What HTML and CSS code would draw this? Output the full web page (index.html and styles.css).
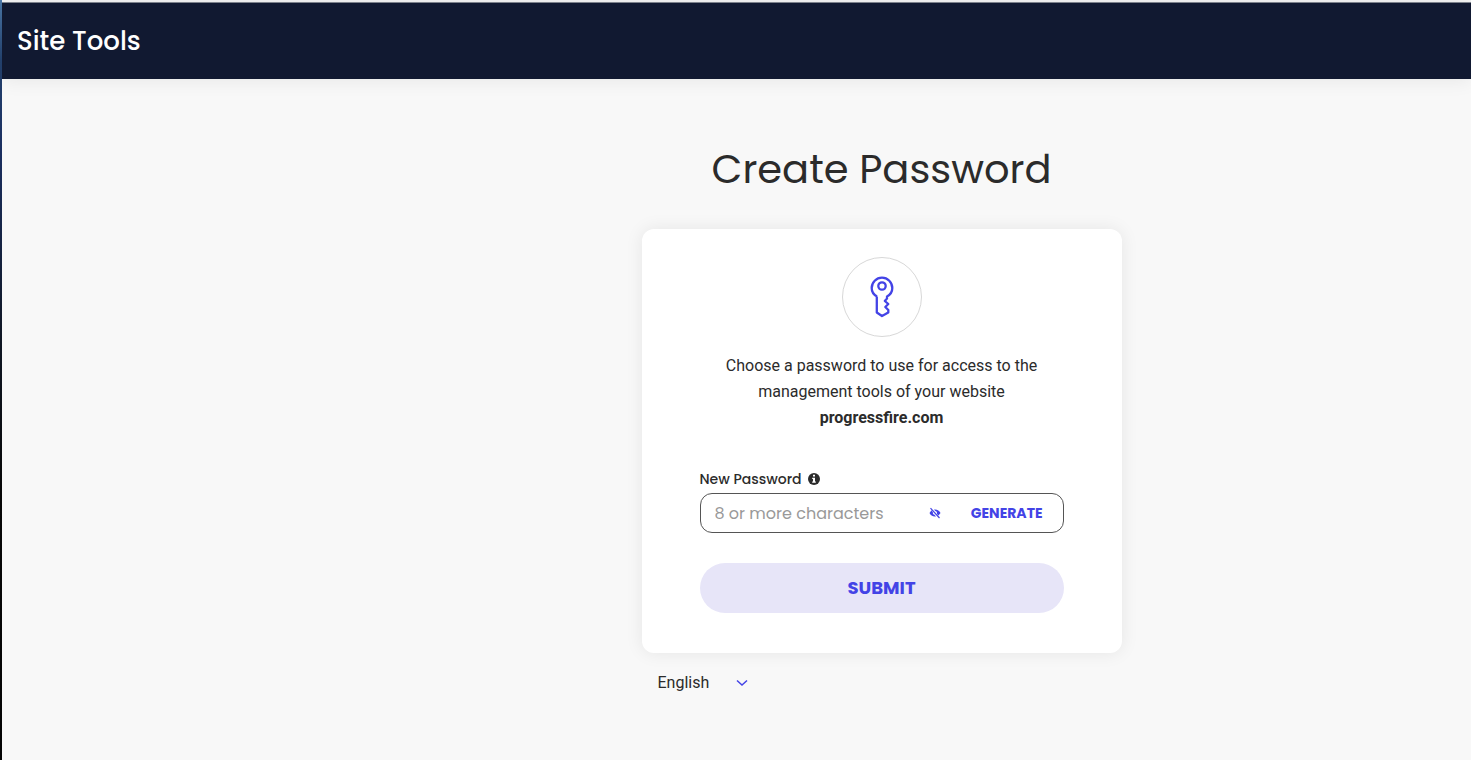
FILE: index.html
```html
<!DOCTYPE html>
<html lang="en">
<head>
    <meta charset="UTF-8">
    <meta name="viewport" content="width=device-width, initial-scale=1.0">
    <title>Site Tools - Create Password</title>
    <link rel="stylesheet" href="styles.css">
</head>
<body>
    <div class="edge"></div>
    <div class="page">
        <header class="header">Site Tools</header>

        <main class="main">
            <h1>Create Password</h1>

            <form class="card">
                <div class="card-icon">
                    <svg width="24" height="42" viewBox="0 0 24 42" fill="none" stroke="#4343e6" stroke-width="2.300" stroke-linejoin="round">
                        <path d="M7 20.500C3.600 18.700 1.700 15.500 1.700 12A10.300 10.300 0 0 1 22.300 12C22.300 15.500 20.400 18.700 17 20.500V22.500L14.800 25L18.300 28L15.300 31L18.300 34V36.500L12 40L6.800 36.500V20.500"/>
                        <circle cx="12" cy="10" r="3.700"/>
                    </svg>
                </div>

                <p class="intro">Choose a password to use for access to the management tools of your website <strong>progressfire.com</strong></p>

                <label class="label" for="password">New Password
                    <svg width="12" height="12" viewBox="0 0 12 12">
                        <circle cx="6" cy="6" r="6" fill="#2b2b2b"/>
                        <path d="M5 1.800h2v1.700H5zM4.200 4.700H7v3.800h.8v1.300H4.200V8.500H5V6h-.8z" fill="#fff"/>
                    </svg>
                </label>
                <div class="field">
                    <input type="password" id="password" name="password" placeholder="8 or more characters">
                    <button type="button" class="toggle" aria-label="Show password">
                        <svg width="12" height="12" viewBox="0 0 12 12">
                            <path d="M2.500 3.200L.5 6C1.500 8 3.300 9.500 6 9.500L7 9.400L5.500 7.800C4.300 7.600 3.600 6.500 3.900 5.200z" fill="#4343e6"/>
                            <path d="M5 2.600C8 2.200 10.300 3.600 11.500 6L9.500 8.600L8 6.900C8.300 5.500 7.600 4.300 6.300 4.100z" fill="#4343e6"/>
                            <path d="M1.500 1.200l9 9.800" stroke="#4343e6" stroke-width="1.200"/>
                        </svg>
                    </button>
                    <button type="button" class="generate">GENERATE</button>
                </div>

                <button type="submit" class="submit">SUBMIT</button>
            </form>

            <div class="language">
                <select id="language" name="language" aria-label="Language">
                    <option>English</option>
                </select>
                <svg width="12" height="8" viewBox="0 0 12 8" fill="none" stroke="#4343e6" stroke-width="1.500">
                    <path d="M1 1.500l5 4.500 5-4.500"/>
                </svg>
            </div>
        </main>
    </div>
</body>
</html>
```

FILE: styles.css
```css
* {
    box-sizing: border-box;
}

body {
    display: flex;
    min-height: 100vh;
    margin: 0;
    background-color: #f8f8f8;
    color: #2b2b2b;
    font-family: Roboto, Arial, sans-serif;
    font-size: 16px;
}

h1,
.header,
.label,
.field,
.submit {
    font-family: Poppins, Inter, sans-serif;
}

.edge {
    width: 2px;
    background: linear-gradient(#4b78a8 0%, #24426f 8%, #1b2f60 20%, #101724 45%, #080808 65%, #050505 100%);
}

.page {
    flex: 1;
    border-top: 2px solid #f3f3f3;
}

.header {
    display: flex;
    align-items: center;
    height: 77px;
    padding: 0 15px;
    border-top: 1px solid #7d828c;
    background-color: #111931;
    color: #fff;
    font-size: 26px;
    font-weight: 500;
    box-shadow: 0 2px 18px rgba(0, 0, 0, 0.07);
}

.main {
    display: flex;
    flex-direction: column;
    align-items: center;
    padding: 60px 0 40px 290px;
}

h1 {
    margin: 0 0 30px;
    font-size: 40px;
    font-weight: 400;
    line-height: 60px;
}

.card {
    display: flex;
    flex-direction: column;
    width: 100%;
    max-width: 480px;
    padding: 28px 58px 40px;
    border-radius: 12px;
    background-color: #fff;
    box-shadow: 0 0 18px rgba(0, 0, 0, 0.08);
}

.card-icon {
    display: flex;
    align-items: center;
    justify-content: center;
    align-self: center;
    width: 80px;
    height: 80px;
    border: 1px solid #d8d8d8;
    border-radius: 50%;
}

.intro {
    margin: 16px 0 38px;
    padding: 0 20px;
    line-height: 26px;
    text-align: center;
}

.intro strong {
    display: block;
}

.label {
    display: flex;
    align-items: center;
    gap: 6px;
    margin-bottom: 4px;
    font-size: 14px;
    font-weight: 500;
    line-height: 20px;
}

.field {
    display: flex;
    align-items: center;
    height: 40px;
    margin-bottom: 30px;
    padding: 0 20px 0 14px;
    border: 1px solid #555;
    border-radius: 12px;
}

.field input {
    flex: 1;
    min-width: 0;
    padding: 0;
    border: none;
    outline: none;
    background: none;
    color: #2b2b2b;
    font-family: inherit;
    font-size: 16px;
}

.field input::placeholder {
    color: #999;
}

button {
    padding: 0;
    border: none;
    background: none;
    color: #4343e6;
    font-family: inherit;
    cursor: pointer;
}

.toggle {
    display: flex;
    margin-right: 30px;
}

.generate {
    font-size: 14px;
    font-weight: 700;
}

.submit {
    height: 50px;
    padding-bottom: 2px;
    border-radius: 25px;
    background-color: #e7e5f8;
    font-family: Poppins, Inter, sans-serif;
    font-size: 18px;
    font-weight: 700;
}

.language {
    display: flex;
    align-items: center;
    gap: 26px;
    width: 100%;
    max-width: 480px;
    padding: 18px 16px;
}

.language select {
    appearance: none;
    padding: 0;
    border: none;
    background: none;
    color: inherit;
    font-family: inherit;
    font-size: 16px;
    line-height: 24px;
}
```
